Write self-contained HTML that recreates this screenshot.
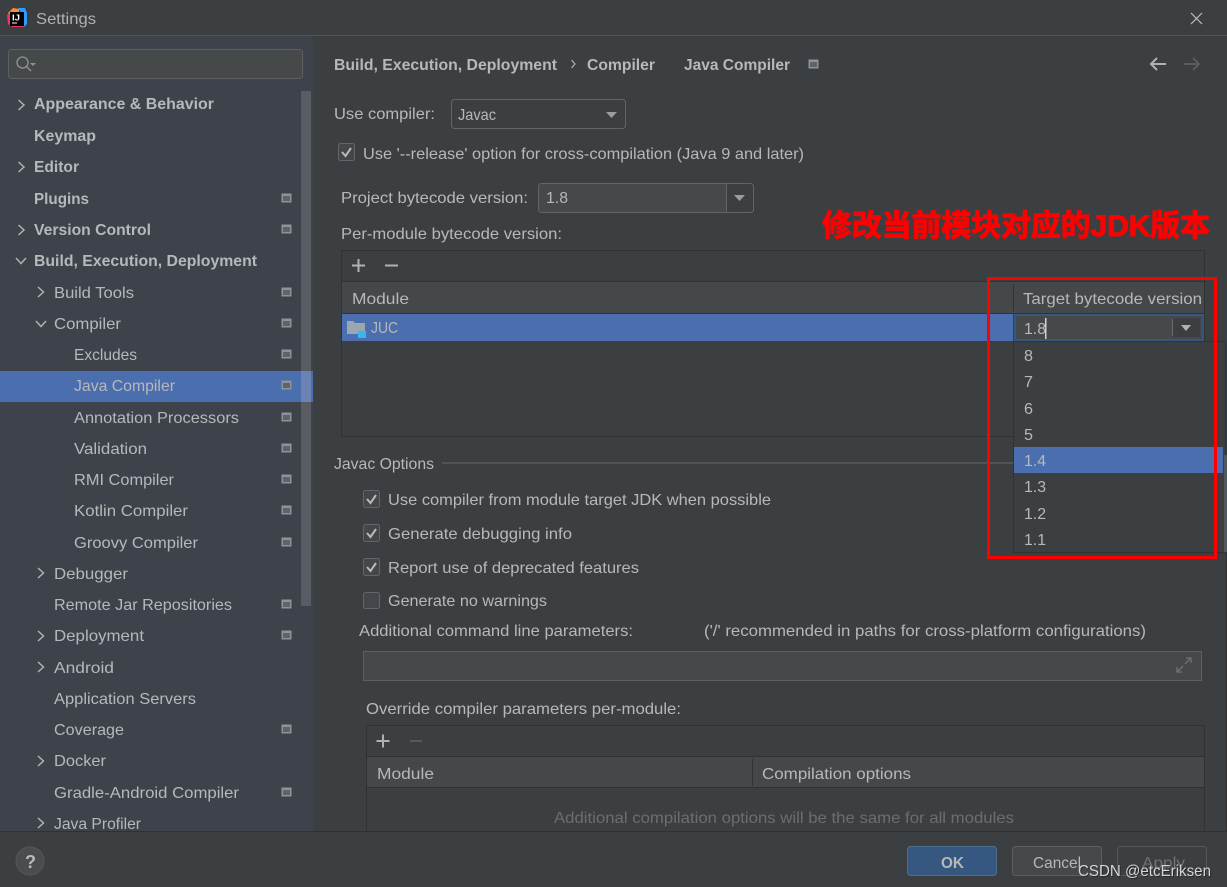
<!DOCTYPE html>
<html><head><meta charset="utf-8"><title>Settings</title>
<style>
html,body{margin:0;padding:0;background:#3c3f41;width:1227px;height:887px;overflow:hidden}
svg{display:block}
text{font-family:"Liberation Sans","Noto Sans CJK SC",sans-serif;font-size:16px;fill:#b6b8ba}
.b{font-weight:bold}
.ch{fill:none;stroke:#afb1b3;stroke-width:1.5}
.cb{fill:#43474a;stroke:#62666a;stroke-width:1}
.ck{fill:none;stroke:#b8babb;stroke-width:2}
.tl{fill:none;stroke:#323232;stroke-width:1}
</style></head><body>
<svg width="1227" height="887" viewBox="0 0 1227 887" xmlns="http://www.w3.org/2000/svg">
<defs>
<symbol id="m" viewBox="0 0 11 11" overflow="visible"><rect x="0.5" y="0.5" width="10" height="9" fill="#8f9398"/><rect x="2" y="3" width="7" height="5" fill="#5f6468"/></symbol>
<clipPath id="sc"><rect x="0" y="36" width="313" height="795"/></clipPath>
<clipPath id="mc"><rect x="313" y="36" width="914" height="795"/></clipPath>
</defs>

<rect width="1227" height="887" fill="#3c3f41"/>
<!-- title bar -->
<rect x="0" y="35" width="1227" height="1" fill="#515353"/>
<path d="M8 13 L13 8 L19 9 L19 13 L10 16 Z" fill="#fe8a2a"/>
<path d="M7 15 L11 13 L11 26 L8 24 Z" fill="#f0316f"/>
<path d="M18 8 L25 8 L27 13 L27 24 L24 27 L22 14 Z" fill="#2f9bff"/>
<path d="M9 24 L22 24 L24 27 L12 27 Z" fill="#f0316f"/>
<rect x="10" y="12" width="14" height="14" fill="#000"/>
<text x="12" y="20.5" style="font-size:8px;font-weight:bold;fill:#fff" textLength="8" lengthAdjust="spacingAndGlyphs">IJ</text>
<rect x="12" y="22.5" width="5" height="1" fill="#fff"/>
<text x="36" y="24" textLength="60" lengthAdjust="spacingAndGlyphs" style="fill:#afb1b3">Settings</text>
<path d="M1191 13 L1202 24 M1202 13 L1191 24" stroke="#bdbfc0" stroke-width="1.2" fill="none"/>

<!-- sidebar -->
<rect x="0" y="36" width="313" height="795" fill="#3e424b"/>
<rect x="8.5" y="49.5" width="294" height="29" rx="3" fill="#45494a" stroke="#5e6060"/>
<circle cx="22.5" cy="62.5" r="5.5" fill="none" stroke="#8f9294" stroke-width="1.3"/><path d="M26.5 66.5 L31 71" stroke="#8f9294" stroke-width="1.5"/><path d="M30 63 L36 63 L33 66 Z" fill="#8f9294"/>
<rect x="301" y="91" width="10" height="515" fill="#595c63"/>
<rect x="0" y="371" width="313" height="31" fill="#4b6eaf"/>
<rect x="301" y="371" width="10" height="31" fill="#6a83b3"/>
<g clip-path="url(#sc)">
<text class="b" x="34" y="109" textLength="180" lengthAdjust="spacingAndGlyphs">Appearance &amp; Behavior</text>
<text class="b" x="34" y="141" textLength="62" lengthAdjust="spacingAndGlyphs">Keymap</text>
<text class="b" x="34" y="172" textLength="45" lengthAdjust="spacingAndGlyphs">Editor</text>
<text class="b" x="34" y="204" textLength="55" lengthAdjust="spacingAndGlyphs">Plugins</text>
<text class="b" x="34" y="235" textLength="117" lengthAdjust="spacingAndGlyphs">Version Control</text>
<text class="b" x="34" y="266" textLength="223" lengthAdjust="spacingAndGlyphs">Build, Execution, Deployment</text>
<text x="54" y="298" textLength="80" lengthAdjust="spacingAndGlyphs">Build Tools</text>
<text x="54" y="329" textLength="67" lengthAdjust="spacingAndGlyphs">Compiler</text>
<text x="74" y="360" textLength="63" lengthAdjust="spacingAndGlyphs">Excludes</text>
<text x="74" y="391" textLength="101" lengthAdjust="spacingAndGlyphs">Java Compiler</text>
<text x="74" y="423" textLength="165" lengthAdjust="spacingAndGlyphs">Annotation Processors</text>
<text x="74" y="454" textLength="73" lengthAdjust="spacingAndGlyphs">Validation</text>
<text x="74" y="485" textLength="100" lengthAdjust="spacingAndGlyphs">RMI Compiler</text>
<text x="74" y="516" textLength="114" lengthAdjust="spacingAndGlyphs">Kotlin Compiler</text>
<text x="74" y="548" textLength="124" lengthAdjust="spacingAndGlyphs">Groovy Compiler</text>
<text x="54" y="579" textLength="74" lengthAdjust="spacingAndGlyphs">Debugger</text>
<text x="54" y="610" textLength="178" lengthAdjust="spacingAndGlyphs">Remote Jar Repositories</text>
<text x="54" y="641" textLength="90" lengthAdjust="spacingAndGlyphs">Deployment</text>
<text x="54" y="673" textLength="60" lengthAdjust="spacingAndGlyphs">Android</text>
<text x="54" y="704" textLength="142" lengthAdjust="spacingAndGlyphs">Application Servers</text>
<text x="54" y="735" textLength="70" lengthAdjust="spacingAndGlyphs">Coverage</text>
<text x="54" y="766" textLength="52" lengthAdjust="spacingAndGlyphs">Docker</text>
<text x="54" y="798" textLength="185" lengthAdjust="spacingAndGlyphs">Gradle-Android Compiler</text>
<text x="54" y="829" textLength="87" lengthAdjust="spacingAndGlyphs">Java Profiler</text>
<path class="ch" d="M18.5 100 L24 105 L18.5 110"/>
<path class="ch" d="M18.5 162 L24 167 L18.5 172"/>
<path class="ch" d="M18.5 225 L24 230 L18.5 235"/>
<path class="ch" d="M16 258 L21 263.5 L26 258"/>
<path class="ch" d="M38 287 L43.5 292 L38 297"/>
<path class="ch" d="M36 321 L41 326.5 L46 321"/>
<path class="ch" d="M38 568 L43.5 573 L38 578"/>
<path class="ch" d="M38 631 L43.5 636 L38 641"/>
<path class="ch" d="M38 662 L43.5 667 L38 672"/>
<path class="ch" d="M38 756 L43.5 761 L38 766"/>
<path class="ch" d="M38 818 L43.5 823 L38 828"/>
<use href="#m" x="281" y="193" width="11" height="11"/>
<use href="#m" x="281" y="224" width="11" height="11"/>
<use href="#m" x="281" y="287" width="11" height="11"/>
<use href="#m" x="281" y="318" width="11" height="11"/>
<use href="#m" x="281" y="349" width="11" height="11"/>
<use href="#m" x="281" y="380" width="11" height="11"/>
<use href="#m" x="281" y="412" width="11" height="11"/>
<use href="#m" x="281" y="443" width="11" height="11"/>
<use href="#m" x="281" y="474" width="11" height="11"/>
<use href="#m" x="281" y="505" width="11" height="11"/>
<use href="#m" x="281" y="537" width="11" height="11"/>
<use href="#m" x="281" y="599" width="11" height="11"/>
<use href="#m" x="281" y="630" width="11" height="11"/>
<use href="#m" x="281" y="724" width="11" height="11"/>
<use href="#m" x="281" y="787" width="11" height="11"/>
</g>

<!-- header -->
<text class="b" x="334" y="70" textLength="223" lengthAdjust="spacingAndGlyphs">Build, Execution, Deployment</text>
<path d="M571.5 60 L575 64 L571.5 68" fill="none" stroke="#afb1b3" stroke-width="1.2"/>
<text class="b" x="587" y="70" textLength="68" lengthAdjust="spacingAndGlyphs">Compiler</text>
<text class="b" x="684" y="70" textLength="106" lengthAdjust="spacingAndGlyphs">Java Compiler</text>
<use href="#m" x="808" y="59" width="11" height="11"/>
<path d="M1151 64 L1166 64 M1157 58 L1151 64 L1157 70" fill="none" stroke="#afb1b3" stroke-width="2"/>
<path d="M1184 64 L1199 64 M1193 58 L1199 64 L1193 70" fill="none" stroke="#5a5d5f" stroke-width="2"/>

<!-- compiler -->
<text x="334" y="119" textLength="101" lengthAdjust="spacingAndGlyphs">Use compiler:</text>
<rect x="451.5" y="99.5" width="174" height="29" rx="3" fill="#3c3f41" stroke="#646464"/>
<text x="458" y="120" textLength="38" lengthAdjust="spacingAndGlyphs">Javac</text>
<path d="M606 112 L617 112 L611.5 118 Z" fill="#9a9c9e"/>
<rect x="338.5" y="143.5" width="16" height="17" rx="2" class="cb"/><path class="ck" d="M342 152 L345.5 156 L351 148"/>
<text x="363" y="159" textLength="441" lengthAdjust="spacingAndGlyphs">Use '--release' option for cross-compilation (Java 9 and later)</text>
<text x="341" y="203" textLength="187" lengthAdjust="spacingAndGlyphs">Project bytecode version:</text>
<rect x="538.5" y="183.5" width="215" height="29" rx="3" fill="#3c3f41" stroke="#646464"/>
<rect x="539" y="184" width="187" height="28" rx="2" fill="#45494a"/>
<rect x="726" y="184" width="1" height="28" fill="#646464"/>
<text x="546" y="203" textLength="22" lengthAdjust="spacingAndGlyphs">1.8</text>
<path d="M734 195 L745 195 L739.5 201 Z" fill="#9a9c9e"/>
<text x="341" y="239" textLength="221" lengthAdjust="spacingAndGlyphs">Per-module bytecode version:</text>

<!-- per-module table -->
<rect x="341.5" y="250.5" width="863" height="186" class="tl"/>
<path d="M352 265.5 L365 265.5 M358.5 259 L358.5 272 M385 265.5 L398 265.5" stroke="#afb1b3" stroke-width="2" fill="none"/>
<rect x="342" y="282" width="862" height="31" fill="#45484a"/>
<rect x="342" y="281" width="862" height="1" fill="#323232"/>
<rect x="342" y="313" width="862" height="1" fill="#323232"/>
<rect x="1013" y="284" width="1" height="27" fill="#323232"/>
<text x="352" y="304" textLength="57" lengthAdjust="spacingAndGlyphs">Module</text>
<text x="1023" y="304" textLength="179" lengthAdjust="spacingAndGlyphs">Target bytecode version</text>
<rect x="342" y="314" width="671" height="27" fill="#4b6eaf"/>
<path d="M347 321 L353 321 L355 323 L365 323 L365 334 L347 334 Z" fill="#9aa7b0"/>
<rect x="358" y="331" width="8" height="7" fill="#3cb4ee"/>
<text x="371" y="333" textLength="27" lengthAdjust="spacingAndGlyphs">JUC</text>
<rect x="1014" y="314" width="190" height="27" fill="#365880"/>
<rect x="1016" y="316" width="186" height="23" fill="#45494a"/>
<rect x="1172" y="319" width="1" height="17" fill="#6a6a6a"/>
<rect x="1173" y="318" width="27" height="19" fill="#3c3f41"/>
<text x="1024" y="334" textLength="22" lengthAdjust="spacingAndGlyphs">1.8</text>
<rect x="1045" y="318" width="1.5" height="21" fill="#d0d0d0"/>
<path d="M1181 325 L1191 325 L1186 331 Z" fill="#afb1b3"/>

<!-- javac options -->
<text x="334" y="469" textLength="100" lengthAdjust="spacingAndGlyphs">Javac Options</text>
<rect x="442" y="462" width="572" height="2" fill="#515455"/>
<rect x="363.5" y="490.5" width="16" height="17" rx="2" class="cb"/><path class="ck" d="M367 499 L370.5 503 L376 495"/>
<text x="388" y="505" textLength="383" lengthAdjust="spacingAndGlyphs">Use compiler from module target JDK when possible</text>
<rect x="363.5" y="524.5" width="16" height="17" rx="2" class="cb"/><path class="ck" d="M367 533 L370.5 537 L376 529"/>
<text x="388" y="539" textLength="184" lengthAdjust="spacingAndGlyphs">Generate debugging info</text>
<rect x="363.5" y="558.5" width="16" height="17" rx="2" class="cb"/><path class="ck" d="M367 567 L370.5 571 L376 563"/>
<text x="388" y="573" textLength="251" lengthAdjust="spacingAndGlyphs">Report use of deprecated features</text>
<rect x="363.5" y="592.5" width="16" height="16" rx="2" class="cb"/>
<text x="388" y="606" textLength="159" lengthAdjust="spacingAndGlyphs">Generate no warnings</text>
<text x="359" y="636" textLength="274" lengthAdjust="spacingAndGlyphs">Additional command line parameters:</text>
<text x="704" y="636" textLength="442" lengthAdjust="spacingAndGlyphs">('/' recommended in paths for cross-platform configurations)</text>
<rect x="363.5" y="651.5" width="838" height="29" fill="#45494a" stroke="#5e6060"/>
<path d="M1177 672 L1183 666 M1177 667 L1177 672 L1182 672 M1191 658 L1185 664 M1186 658 L1191 658 L1191 663" fill="none" stroke="#6e7274" stroke-width="1.3"/>
<text x="366" y="714" textLength="315" lengthAdjust="spacingAndGlyphs">Override compiler parameters per-module:</text>

<!-- override table -->
<g clip-path="url(#mc)">
<rect x="366.5" y="725.5" width="838" height="130" class="tl"/>
<path d="M376.5 741 L389.5 741 M383 734.5 L383 747.5" stroke="#afb1b3" stroke-width="2" fill="none"/>
<path d="M410 741 L422 741" stroke="#55585a" stroke-width="2" fill="none"/>
<rect x="367" y="757" width="837" height="30" fill="#45484a"/>
<rect x="367" y="756" width="837" height="1" fill="#323232"/>
<rect x="367" y="787" width="837" height="1" fill="#323232"/>
<rect x="752" y="759" width="1" height="27" fill="#323232"/>
<text x="377" y="779" textLength="57" lengthAdjust="spacingAndGlyphs">Module</text>
<text x="762" y="779" textLength="149" lengthAdjust="spacingAndGlyphs">Compilation options</text>
<text x="554" y="823" textLength="460" lengthAdjust="spacingAndGlyphs" style="fill:#6b6e70">Additional compilation options will be the same for all modules</text>
</g>

<!-- popup -->
<rect x="1013.5" y="341.5" width="212" height="211" fill="#3c3f41" stroke="#323232"/>
<rect x="1226" y="552" width="1" height="279" fill="#323232"/>
<rect x="1014" y="447" width="209" height="26" fill="#4b6eaf"/>
<rect x="1224" y="455" width="3" height="97" fill="#55585a"/>
<text x="1024" y="361" textLength="9" lengthAdjust="spacingAndGlyphs">8</text>
<text x="1024" y="387" textLength="9" lengthAdjust="spacingAndGlyphs">7</text>
<text x="1024" y="414" textLength="9" lengthAdjust="spacingAndGlyphs">6</text>
<text x="1024" y="440" textLength="9" lengthAdjust="spacingAndGlyphs">5</text>
<text x="1024" y="466" textLength="22" lengthAdjust="spacingAndGlyphs">1.4</text>
<text x="1024" y="492" textLength="22" lengthAdjust="spacingAndGlyphs">1.3</text>
<text x="1024" y="519" textLength="22" lengthAdjust="spacingAndGlyphs">1.2</text>
<text x="1024" y="545" textLength="22" lengthAdjust="spacingAndGlyphs">1.1</text>

<!-- annotation -->
<rect x="988.5" y="278.5" width="227" height="279" fill="none" stroke="#ff0000" stroke-width="3"/>
<text x="822" y="236" textLength="388" lengthAdjust="spacingAndGlyphs" style="font-size:30px;font-weight:bold;fill:#ff0000;stroke:#ff0000;stroke-width:1">修改当前模块对应的JDK版本</text>

<!-- footer -->
<rect x="0" y="831" width="1227" height="56" fill="#3c3f41"/>
<rect x="0" y="831" width="1227" height="1" fill="#2f3234"/>
<circle cx="30" cy="861" r="14" fill="#4a4d4f" stroke="#55585a"/>
<text x="25" y="868" style="font-size:18px;font-weight:bold;fill:#b8babb">?</text>
<rect x="907.5" y="846.5" width="89" height="29" rx="3" fill="#365880" stroke="#4c708c"/>
<text class="b" x="941" y="868" textLength="23" lengthAdjust="spacingAndGlyphs">OK</text>
<rect x="1012.5" y="846.5" width="89" height="29" rx="3" fill="#45494a" stroke="#5e6060"/>
<text x="1033" y="868" textLength="48" lengthAdjust="spacingAndGlyphs">Cancel</text>
<rect x="1117.5" y="846.5" width="89" height="29" rx="3" fill="#3c3f41" stroke="#55585a"/>
<text x="1142" y="868" textLength="43" lengthAdjust="spacingAndGlyphs" style="fill:#6f7274">Apply</text>
<text x="1079" y="877" textLength="133" lengthAdjust="spacingAndGlyphs" style="fill:#101010;fill-opacity:.5">CSDN @etcEriksen</text>
<text x="1078" y="876" textLength="133" lengthAdjust="spacingAndGlyphs" style="fill:#d6d6d6">CSDN @etcEriksen</text>
</svg>
</body></html>
